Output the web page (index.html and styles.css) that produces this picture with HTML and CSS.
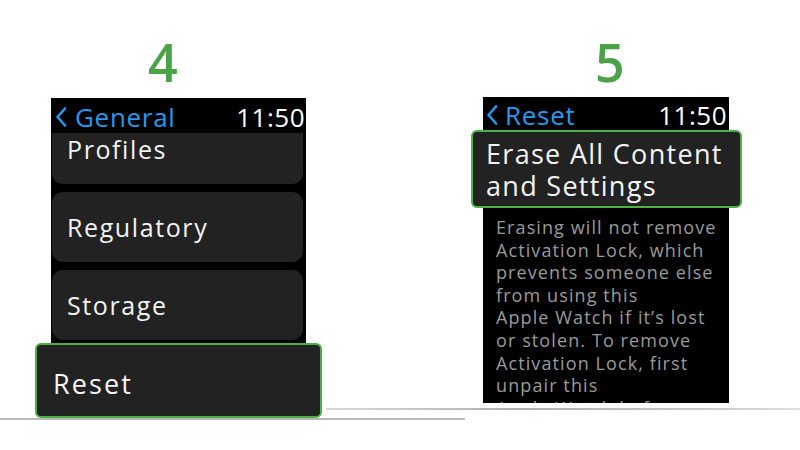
FILE: index.html
```html
<!DOCTYPE html>
<html>
<head>
<meta charset="utf-8">
<link rel="stylesheet" href="styles.css">
</head>
<body>
<div class="stage">
  <section class="panel panel-left">
    <div class="num num-left">4</div>
    <div class="screen screen-left">
      <div class="bar">
        <span class="back"><svg class="chev" width="12" height="22" viewBox="0 0 12 22"><polyline points="10,2.5 2.5,11 10,19.5" fill="none" stroke="#1f9bf2" stroke-width="2.6" stroke-linecap="round" stroke-linejoin="round"/></svg>General</span>
        <span class="time">11:50</span>
      </div>
      <div class="list">
        <div class="cell cell-first">Profiles</div>
        <div class="cell">Regulatory</div>
        <div class="cell">Storage</div>
      </div>
    </div>
    <div class="pick pick-reset">Reset</div>
  </section>
  <section class="panel panel-right">
    <div class="num num-right">5</div>
    <div class="screen screen-right">
      <div class="bar bar-right">
        <span class="back"><svg class="chev chev-right" width="12" height="22" viewBox="0 0 12 22"><polyline points="10,2.5 2.5,11 10,19.5" fill="none" stroke="#1f9bf2" stroke-width="2.6" stroke-linecap="round" stroke-linejoin="round"/></svg>Reset</span>
        <span class="time">11:50</span>
      </div>
    </div>
    <div class="pick pick-erase"><div class="pick-line">Erase All Content</div><div class="pick-line">and Settings</div></div>
    <div class="screen note">
      <p class="note-text">Erasing will not remove<br>Activation Lock, which<br>prevents someone else<br>from using this<br>Apple Watch if it’s lost<br>or stolen. To remove<br>Activation Lock, first<br>unpair this<br>Apple Watch before</p>
    </div>
  </section>
  <div class="rule rule-left"></div>
  <div class="rule rule-right"></div>
</div>
</body>
</html>
```

FILE: styles.css
```css
* { box-sizing: border-box; }
html, body { margin: 0; padding: 0; background: #fff; }
body { width: 800px; height: 450px; overflow: hidden; font-family: "Open Sans", "Noto Sans", sans-serif; }

.stage { position: relative; display: flex; align-items: flex-start; width: 800px; height: 450px; }

.panel { display: flex; flex-direction: column; }
.panel-left { width: 287px; margin-left: 35px; }
.panel-right { width: 271px; margin-left: 149px; }

.num {
  color: #4ca246;
  font-weight: 600;
  font-size: 52px;
  line-height: 52px;
  padding-top: 36px;
}
.num-left { height: 98px; padding-left: 113px; }
.num-right { height: 97px; padding-left: 124px; }

.screen { background: #000; }
.screen-left { width: 255px; height: 245px; margin-left: 16px; display: flex; flex-direction: column; }
.screen-right { width: 246px; height: 33px; margin-left: 12px; }

.bar {
  height: 35px;
  flex: none;
  display: flex;
  align-items: center;
  justify-content: space-between;
  padding: 3px 1px 0 4px;
  font-size: 26px;
  line-height: 32px;
}
.bar-right { height: 33px; line-height: 30px; padding: 3px 2px 0 3px; }
.back { color: #1f9bf2; display: flex; align-items: center; letter-spacing: 0.7px; }
.chev { margin-right: 8px; }
.chev-right { margin-right: 7px; }
.time { color: #fff; letter-spacing: 0.5px; }

.list { flex: 1; overflow: hidden; display: flex; flex-direction: column; gap: 8px; padding: 0 3px 0 1px; }
.cell {
  flex: none;
  height: 70px;
  background: #222;
  border-radius: 11px;
  color: #f2f2f2;
  font-size: 25px;
  display: flex;
  align-items: center;
  padding-left: 15px;
  letter-spacing: 1.6px;
}
.cell-first { margin-top: -19px; }

.pick {
  background: #222;
  border: 2px solid #4bb045;
  border-radius: 6px;
  color: #f4f4f4;
  font-size: 27px;
}
.pick-reset { height: 75px; display: flex; align-items: center; padding: 6px 0 0 16px; letter-spacing: 2.1px; }
.pick-erase { height: 78px; padding: 6px 0 0 13px; letter-spacing: 1.3px; display: flex; flex-direction: column; }
.pick-line { height: 32px; line-height: 32px; }

.note { width: 246px; height: 195px; margin-left: 12px; overflow: hidden; }
.note-text {
  margin: 0;
  padding: 8px 0 0 13px;
  color: #9a9a9a;
  font-size: 18px;
  line-height: 22.6px;
  letter-spacing: 1.1px;
  white-space: nowrap;
}

.rule { position: absolute; height: 2px; }
.rule-left { left: 0; top: 418px; width: 465px; background: #b8b8b8; }
.rule-right { left: 326px; top: 408px; width: 474px; background: linear-gradient(to right, #d8d8d8, #b0b0b0 40%, #c8c8c8 80%, #e0e0e0); }
```
